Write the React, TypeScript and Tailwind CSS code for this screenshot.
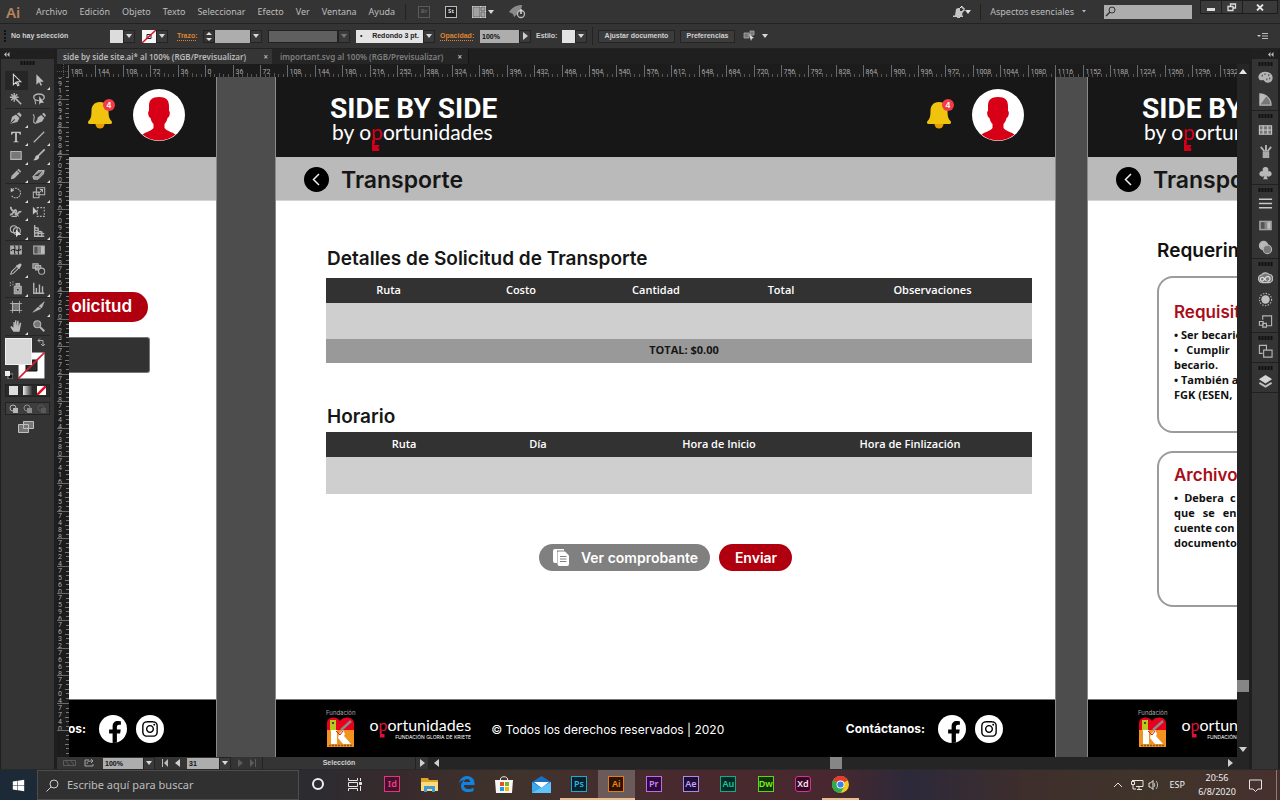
import React from "react";
import {
  FaFacebookF,
  FaInstagram,
  FaWindows,
} from "react-icons/fa";

type Kids = { children?: React.ReactNode };

/* ---------- shared bits ---------- */

function Ico({ children, size = 16 }: Kids & { size?: number }) {
  return (
    <svg
      width={size}
      height={size}
      viewBox="0 0 16 16"
      fill="none"
      stroke="#b4b4b4"
      strokeWidth="1.2"
      className="shrink-0"
      aria-hidden="true"
    >
      {children}
    </svg>
  );
}

function Down({ dim = false }: { dim?: boolean }) {
  return (
    <svg width="6" height="4" viewBox="0 0 6 4" className="shrink-0" aria-hidden="true">
      <path d="M0 0h6L3 4z" fill={dim ? "#777" : "#d8d8d8"} />
    </svg>
  );
}

function Arrow({ dir, color = "#cfcfcf" }: { dir: "left" | "right" | "up" | "down"; color?: string }) {
  const d = {
    left: "M6 0v8L1 4z",
    right: "M2 0v8l5-4z",
    up: "M0 6h8L4 1z",
    down: "M0 2h8L4 7z",
  }[dir];
  return (
    <svg width="8" height="8" viewBox="0 0 8 8" className="shrink-0" aria-hidden="true">
      <path d={d} fill={color} />
    </svg>
  );
}

function DropButton({ label, dim }: { label: string; dim?: boolean }) {
  return (
    <button
      aria-label={label}
      className="flex h-[13px] w-3 shrink-0 items-center justify-center border border-[#232323] bg-[#3a3a3a]"
    >
      <Down dim={dim} />
    </button>
  );
}

function Grip() {
  return (
    <svg width="15" height="4" viewBox="0 0 15 4" className="shrink-0" aria-hidden="true">
      <path d="M1.500 0v4M4.500 0v4M7.500 0v4M10.500 0v4M13.500 0v4" stroke="#111" strokeWidth="2" />
    </svg>
  );
}

/* ---------- menu bar ---------- */

const menus = ["Archivo", "Edición", "Objeto", "Texto", "Seleccionar", "Efecto", "Ver", "Ventana", "Ayuda"];

function MenuBar() {
  return (
    <header className="flex h-6 shrink-0 items-center border-b border-[#222] bg-[#343434] text-[9px] text-[#bdbdbd]">
      <span className="w-9 shrink-0 pl-[6px] text-[15px] leading-5 font-semibold text-[#b8845f]">Ai</span>
      <nav className="flex shrink-0 gap-3">
        {menus.map((m) => (
          <button key={m}>{m}</button>
        ))}
      </nav>
      <span className="ml-[10px] h-4 w-px bg-[#222]" />
      <div className="ml-3 flex items-center gap-[15px] text-[6px] font-bold">
        <span className="flex h-3 w-3 items-center justify-center border border-[#5a5a5a] text-[#5f5f5f]">Br</span>
        <span className="flex h-3 w-3 items-center justify-center border border-[#bbb] bg-[#222] text-[#ddd]">St</span>
        <button aria-label="Organizar documentos" className="flex items-center gap-[2px]">
          <svg width="14" height="12" viewBox="0 0 14 12" aria-hidden="true">
            <path d="M0 0h14v12H0z" fill="#d9d9d9" />
            <path d="M1 1h7v10H1zM9 1h4v4H9zM9 6h4v5H9z" fill="#a2a2a2" stroke="#4a4a4a" strokeWidth=".6" />
          </svg>
          <Down />
        </button>
        <svg width="17" height="14" viewBox="0 0 17 14" aria-hidden="true">
          <path d="M0 7C4 1 9 0 13 0c0 4-3 8-8 12l-1-3-4-2z" fill="#8a8a8a" />
          <circle cx="12" cy="9" r="3.500" fill="#343434" stroke="#bbb" strokeWidth="1.300" />
          <path d="M12 4v5" stroke="#ddd" strokeWidth="1.500" />
        </svg>
      </div>
      <div className="ml-auto flex items-center">
        <svg width="18" height="12" viewBox="0 0 18 12" aria-hidden="true">
          <path d="M0 9.500h2L3 3l2-1h2v3h3l-1 4.500h1V11H0zM4 11h3v1H4z" fill="#c4c4c4" />
          <path d="M7 2l2-2v2h2v3H9" stroke="#eee" fill="none" />
          <path d="M12 4h6l-3 4z" fill="#ddd" />
        </svg>
        <span className="mx-[9px] h-4 w-px bg-[#222]" />
        <button className="flex items-center gap-2">
          <span>Aspectos esenciales</span>
          <svg width="4" height="3" viewBox="0 0 4 3" aria-hidden="true">
            <path d="M0 0h4L2 2.500z" fill="#bbb" />
          </svg>
        </button>
        <label className="ml-[18px] flex h-[14px] w-[88px] items-center bg-[#adadad] pl-[1px]">
          <svg width="11" height="11" viewBox="0 0 11 11" fill="none" stroke="#333" aria-hidden="true">
            <circle cx="7" cy="4" r="3" />
            <path d="M5 6L1 10" strokeWidth="1.400" />
          </svg>
          <input aria-label="Buscar en la ayuda" className="w-0 min-w-0 flex-1 bg-transparent outline-none" />
        </label>
      </div>
      <div className="mr-[2px] ml-2 flex h-[14px] self-start border border-[#1d1d1d] bg-[#3a3a3a]">
        <button aria-label="Minimizar" className="flex w-5 items-center justify-center">
          <span className="mt-1 h-[3px] w-2 bg-[#ddd]" />
        </button>
        <button aria-label="Restaurar" className="flex w-[21px] items-center justify-center border-l border-[#1d1d1d]">
          <svg width="10" height="9" viewBox="0 0 10 9" fill="none" stroke="#ddd" strokeWidth="1.300" aria-hidden="true">
            <path d="M3.500 3V1h5v4h-2M1 3.500h5v4H1z" />
          </svg>
        </button>
        <button aria-label="Cerrar" className="flex w-[35px] items-center justify-center border-l border-[#1d1d1d]">
          <svg width="8" height="7" viewBox="0 0 8 7" stroke="#e4e4e4" strokeWidth="1.800" aria-hidden="true">
            <path d="M1 .5l6 6M7 .5l-6 6" />
          </svg>
        </button>
      </div>
    </header>
  );
}

/* ---------- control bar ---------- */

function ControlBar() {
  return (
    <section className="flex h-[25px] shrink-0 items-center border-b border-[#222] bg-[#343434] pl-1 font-['Liberation_Sans'] text-[7px] font-bold text-[#d0d0d0]">
      <span className="h-3 w-0 border-l-2 border-dotted border-[#111]" />
      <span className="w-[104px] shrink-0 pl-[5px]">No hay selección</span>
      <span className="h-[13px] w-[13px] bg-[#dcdcdc]" />
      <DropButton label="Relleno" />
      <svg width="14" height="13" viewBox="0 0 14 13" className="ml-[7px]" aria-hidden="true">
        <path d="M0 0h14v13H0z" fill="#f5f5f5" />
        <path d="M5 4.500h4v4H5z" fill="none" stroke="#222" />
        <path d="M0 13L14 0" stroke="#d8192b" strokeWidth="1.500" />
      </svg>
      <DropButton label="Color de trazo" />
      <label htmlFor="stroke" className="ml-[9px] w-[26px] text-[#dd8430] underline decoration-dotted underline-offset-2">
        Trazo:
      </label>
      <span className="flex h-[13px] w-3 flex-col items-center justify-between border border-[#222] py-px">
        <svg width="6" height="3" viewBox="0 0 6 3" aria-hidden="true"><path d="M0 3h6L3 0z" fill="#ddd" /></svg>
        <svg width="6" height="3" viewBox="0 0 6 3" aria-hidden="true"><path d="M0 0h6L3 3z" fill="#ddd" /></svg>
      </span>
      <input id="stroke" className="h-[13px] w-[35px] bg-[#adadad] outline-none" />
      <DropButton label="Grosor" />
      <span className="ml-[6px] h-[13px] w-[70px] border border-[#222] bg-[#5f5f5f]" />
      <DropButton label="Perfil de anchura" dim />
      <select
        aria-label="Definición de pincel"
        className="ml-[6px] h-[13px] w-[67px] appearance-none bg-[#e4e4e4] pl-1 text-[7px] text-[#222] outline-none"
      >
        <option>•&nbsp;&nbsp;&nbsp;&nbsp;&nbsp;Redondo 3 pt.</option>
      </select>
      <DropButton label="Pinceles" />
      <label htmlFor="opacity" className="ml-[5px] w-10 text-[#dd8430] underline decoration-dotted underline-offset-2">
        Opacidad:
      </label>
      <input id="opacity" defaultValue="100%" className="h-[13px] w-[39px] bg-[#adadad] pl-[2px] text-[7px] text-[#111] outline-none" />
      <button aria-label="Deslizador de opacidad" className="flex h-[13px] w-3 items-center justify-center border border-[#232323] bg-[#3a3a3a]">
        <Arrow dir="right" />
      </button>
      <span className="w-[31px] pl-[5px]">Estilo:</span>
      <span className="h-[13px] w-[13px] bg-[#e2e2e2]" />
      <DropButton label="Estilo gráfico" />
      <span className="mx-[5px] h-[18px] w-px bg-[#222]" />
      <button className="h-[13px] w-[77px] border border-[#242424] bg-[#3c3c3c]">Ajustar documento</button>
      <button className="ml-[5px] h-[13px] w-[55px] border border-[#242424] bg-[#3c3c3c]">Preferencias</button>
      <button aria-label="Alinear" className="ml-[8px] flex items-center gap-[6px]">
        <svg width="13" height="12" viewBox="0 0 13 12" aria-hidden="true">
          <path d="M1 3h5v5H1zM7 1h4v4H7z" fill="#777" stroke="#aaa" strokeWidth=".8" />
          <path d="M6 4l5 4-2 .4L8 11z" fill="#ddd" />
        </svg>
        <Down />
      </button>
      <button aria-label="Menú del panel" className="mr-3 ml-auto">
        <svg width="11" height="8" viewBox="0 0 11 8" aria-hidden="true">
          <path d="M0 3h4L2 5z" fill="#ccc" />
          <path d="M5 1.500h6M5 4h6M5 6.500h6" stroke="#bbb" />
        </svg>
      </button>
    </section>
  );
}

/* ---------- tools panel ---------- */

const toolGroups: { h: string; tools: { name: string; icon: React.ReactNode; more?: boolean; on?: boolean }[] }[] = [
  {
    h: "h-[38px]",
    tools: [
      { name: "Selección", on: true, icon: <path d="M5 1.500v12l3-3 2 4 1.500-.8-2-3.700h4z" fill="#222" stroke="#d5d5d5" /> },
      { name: "Selección directa", more: true, icon: <path d="M5 1.500v12l3-3 2 4 1.500-.8-2-3.700h4z" fill="#bdbdbd" stroke="none" /> },
      { name: "Varita mágica", icon: <><path d="M8 8l6 6" strokeWidth="1.800" /><path d="M6 1v10M1 6h10M2.500 2.500l7 7M9.500 2.500l-7 7" strokeWidth="1.600" /></> },
      { name: "Lazo", icon: <><ellipse cx="8" cy="6" rx="6" ry="3.800" strokeWidth="1.600" /><path d="M4 9c-2 2 1 3 0 5" /><path d="M8 4v11l2-2.500h4z" fill="#c8c8c8" stroke="#333" strokeWidth=".5" /></> },
    ],
  },
  {
    h: "h-[75px]",
    tools: [
      { name: "Pluma", more: true, icon: <><path d="M1.500 14.500l2-8L8 4l4 4-2.500 4.500z" fill="#b4b4b4" stroke="none" /><path d="M9 3l4 4 1.500-2.500-3-3z" fill="#b4b4b4" stroke="none" /><path d="M2 14l4.500-4.500" stroke="#333" /></> },
      { name: "Curvatura", icon: <><path d="M5 14.500l1.500-7 4-3L14 8l-2.500 4zM11.500 3.500l3.500 3.500.8-2.500-2.300-2.500z" fill="#b4b4b4" stroke="none" /><path d="M1 4c4 2-1 8 1.500 9.500S5 12 6 11" /></> },
      { name: "Texto", more: true, icon: <path d="M2.500 2h11v3.500h-1C12 4 11.500 3.200 9 3.200V12c0 1 .5 1.200 2 1.400v.6H5v-.6c1.500-.2 2-.4 2-1.400V3.200C4.500 3.200 4 4 3.500 5.500h-1z" fill="#c8c8c8" stroke="none" /> },
      { name: "Segmento de línea", more: true, icon: <path d="M2 14L14 2" strokeWidth="1.400" /> },
      { name: "Rectángulo", more: true, icon: <path d="M2 4h12v9H2z" fill="#777" /> },
      { name: "Pincel", more: true, icon: <><path d="M14.500 1.500L7 9" strokeWidth="2" /><path d="M8 9c1 4-3 5-7 5 3-1 2-5 5-6z" fill="#c0c0c0" stroke="none" /></> },
      { name: "Lápiz", more: true, icon: <><path d="M2 14l1-4 8-8 3 3-8 8z" fill="#b0b0b0" stroke="none" /><path d="M9.500 4l2.800 2.800" stroke="#444" /></> },
      { name: "Borrador", more: true, icon: <path d="M1 11l6-7h7l-1 4-6 6H2zM1 11h6l6-7" fill="#999" stroke="#d0d0d0" strokeWidth=".8" /> },
    ],
  },
  {
    h: "h-[57px]",
    tools: [
      { name: "Rotar", more: true, icon: <><path d="M4 4a5.500 5.500 0 1 1-1 7" strokeDasharray="2 1" /><path d="M2 2v5l4-2z" fill="#c0c0c0" stroke="none" /></> },
      { name: "Escala", more: true, icon: <><path d="M5 2h9.500v8H5zM1.500 7H8v6.500H1.500z" /><path d="M8 8l4-4M9 4h3v3" /></> },
      { name: "Anchura", more: true, icon: <><path d="M2 2c0 3 1 4 3 5M1 11c4 1 5-7 7-5s-2 4 0 5 3-5 6-3" strokeWidth="2" /><path d="M5 7l6 6M3 13h6" /></> },
      { name: "Transformación libre", icon: <><path d="M6 3h8v10H6z" strokeDasharray="2 1.500" /><path d="M1 2v9l2.500-2.500H7z" fill="#c8c8c8" stroke="none" /></> },
      { name: "Creador de formas", more: true, icon: <><circle cx="5.500" cy="6" r="4" /><circle cx="9" cy="8" r="4" /><path d="M8 6v9l2.500-2.500H14z" fill="#ddd" stroke="none" /></> },
      { name: "Cuadrícula de perspectiva", more: true, icon: <path d="M3 1v13h11M3 4l4 1v9M3 7l8 2v5M3 10l11 1" strokeWidth="1.500" /> },
    ],
  },
  {
    h: "h-[57px]",
    tools: [
      { name: "Malla", icon: <><path d="M2 3.500h12v9H2z" fill="#aaa" /><path d="M2 9c4-5 7 3 12-2M6 3c3 3-2 6 1 10M11 3c2 4-2 5 0 10" stroke="#222" /></> },
      { name: "Degradado", icon: <><path d="M2 3.500h4v9H2z" fill="#555" stroke="none" /><path d="M6 3.500h4v9H6z" fill="#888" stroke="none" /><path d="M10 3.500h4v9h-4z" fill="#bbb" stroke="none" /><path d="M2 3.500h12v9H2z" /></> },
      { name: "Cuentagotas", more: true, icon: <><path d="M2 14l1-3 6-6 2 2-6 6z" /><path d="M8 4l4 4 1-2 1.500-3L13 1.500 10 3z" fill="#bbb" stroke="none" /></> },
      { name: "Fusión", icon: <><path d="M1 2h6v5H1zM4 4h6v5H4z" fill="#777" /><circle cx="11" cy="10.500" r="3.500" fill="#343434" /></> },
      { name: "Rociar símbolos", more: true, icon: <><path d="M6 6h8v8.500H6zM8 3h4v3H8z" fill="#999" /><circle cx="10" cy="10" r="1.800" fill="#333" /><path d="M1 2h1M4 1h1M1 5h1M4 4h1" strokeWidth="1.600" /></> },
      { name: "Gráfica de columnas", more: true, icon: <path d="M2 2v12h12M5 14V8M8.500 14V4M12 14V6" strokeWidth="1.600" /> },
    ],
  },
  {
    h: "h-[38px]",
    tools: [
      { name: "Mesa de trabajo", icon: <><path d="M4 4h8v8H4z" fill="#777" /><path d="M4 1v14M12 1v14M1 4h14M1 12h14" strokeWidth=".9" /></> },
      { name: "Sector", more: true, icon: <path d="M1 14l6-6 3 2zM8 7l6-5-3 7z" fill="#b8b8b8" stroke="#b8b8b8" strokeWidth=".6" /> },
      { name: "Mano", more: true, icon: <path d="M5 14.500L1.500 9 3 8l2 2V3.500h1.500V8L7 1.500h1.500V8l1-6H11v6.500l1.500-4.500L14 4.500 12 14.500z" fill="#bbb" stroke="none" /> },
      { name: "Zoom", icon: <><circle cx="6" cy="6" r="4" fill="#777" /><path d="M9 9l5 5" strokeWidth="2.400" /></> },
    ],
  },
];

function ToolsPanel() {
  return (
    <aside className="flex w-[55px] shrink-0 flex-col border-x border-[#1e1e1e] bg-[#343434]">
      <div className="flex h-[10px] shrink-0 items-center bg-[#202020] pl-[3px] text-[#bbb]">
        <svg width="6" height="5" viewBox="0 0 6 5" aria-hidden="true">
          <path d="M2.500 0v5L0 2.500zM5.500 0v5L3 2.500z" fill="#bbb" />
        </svg>
      </div>
      <div className="flex h-[12px] shrink-0 justify-center pt-[2px]">
        <Grip />
      </div>
      {toolGroups.map((g, i) => (
        <div key={i} className={`grid ${g.h} mx-1 shrink-0 grid-cols-2 border-b border-[#252525]`}>
          {g.tools.map((t) => (
            <button
              key={t.name}
              aria-label={t.name}
              className={`relative flex items-center justify-center ${t.on ? "bg-[#262626]" : ""}`}
            >
              <Ico size={14}>{t.icon}</Ico>
              {t.more && (
                <svg width="3" height="3" viewBox="0 0 3 3" className="absolute right-0 bottom-0" aria-hidden="true">
                  <path d="M3 0v3H0z" fill="#ddd" />
                </svg>
              )}
            </button>
          ))}
        </div>
      ))}
      <div className="relative mt-[2px] h-[42px] shrink-0">
        <svg width="27" height="27" viewBox="0 0 27 27" className="absolute top-[14px] left-[17px]" aria-hidden="true">
          <path d="M0 0h27v27H0z" fill="#fff" stroke="#222" />
          <path d="M8 8h11v11H8z" fill="#2d2d2d" stroke="#111" />
          <path d="M0 27L27 0" stroke="#d0202f" strokeWidth="1.600" />
        </svg>
        <span className="absolute top-0 left-1 h-[27px] w-[27px] border border-[#f0f0f0] bg-[#d8d8d8]" />
        <svg width="9" height="9" viewBox="0 0 9 9" fill="none" stroke="#aaa" className="absolute top-0 left-[36px]" aria-hidden="true">
          <path d="M1 2.500h5v5M3 .5l-2 2 2 2M4 6l2 2 2-2" />
        </svg>
        <svg width="8" height="8" viewBox="0 0 8 8" className="absolute top-[33px] left-1" aria-hidden="true">
          <path d="M3 3h5v5H3z" fill="#111" stroke="#999" />
          <path d="M0 0h5v5H0z" fill="#eee" />
        </svg>
      </div>
      <div className="mx-1 mt-[4px] flex h-[13px] shrink-0 items-center justify-around border border-[#222] bg-[#2a2a2a]">
        <button aria-label="Color" className="h-[9px] w-[9px] bg-[#ddd]" />
        <button aria-label="Degradado lineal" className="h-[9px] w-[9px] bg-linear-to-r from-[#eee] to-[#333]" />
        <button aria-label="Ninguno">
          <svg width="9" height="9" viewBox="0 0 9 9" aria-hidden="true">
            <path d="M0 0h9v9H0z" fill="#fff" />
            <path d="M0 9L9 0" stroke="#e01020" strokeWidth="2.500" />
          </svg>
        </button>
      </div>
      <div className="mx-1 mt-[5px] flex h-[13px] shrink-0 items-center justify-around border border-[#222] bg-[#3e3e3e]">
        {["#b8b8b8", "#8d8d8d", "#585858"].map((c) => (
          <svg key={c} width="9" height="9" viewBox="0 0 9 9" aria-hidden="true">
            <circle cx="4" cy="4" r="3" fill="none" stroke={c} />
            <path d="M4 4h5v5H4z" fill={c} />
          </svg>
        ))}
      </div>
      <button aria-label="Modo de pantalla" className="mt-[6px] ml-[17px]">
        <svg width="16" height="12" viewBox="0 0 16 12" fill="#777" stroke="#c0c0c0" aria-hidden="true">
          <path d="M.5 3.500h10v8H.5zM5.500.5h10v7h-10z" />
        </svg>
      </button>
    </aside>
  );
}

/* ---------- rulers ---------- */

const STEP = 27.42;

function TopRuler() {
  const marks = Array.from({ length: 43 }, (_, i) => i);
  return (
    <svg height="13" className="block w-full bg-[#1c1c1c] font-['Roboto']" aria-hidden="true">
      <path d="M0 7.500h12M6.500 0v13" stroke="#555" strokeDasharray="1 1" />
      {marks.map((i) => {
        const x = Math.round(11 + i * STEP) + 0.5;
        return (
          <g key={i}>
            <path d={`M${x} 1v12`} stroke="#6a6a6a" />
            <path d={`M${x + 5} 10v3M${x + 9} 10v3M${x + 14} 9v4M${x + 18} 10v3M${x + 23} 10v3`} stroke="#555" />
            <text x={x + 2} y="10" fontSize="7" fill="#aaa">
              {Math.abs(i * 36 - 180)}
            </text>
          </g>
        );
      })}
    </svg>
  );
}

function SideRuler() {
  const marks = Array.from({ length: 25 }, (_, i) => i);
  return (
    <svg width="12" className="block h-full shrink-0 bg-[#1c1c1c] font-['Roboto']" aria-hidden="true">
      {marks.map((i) => {
        const y = Math.round(-5 + i * STEP) + 0.5;
        const digits = i < 24 ? String(6912 + i * 36).split("") : [];
        return (
          <g key={i}>
            <path d={`M0 ${y}h12`} stroke="#6a6a6a" />
            <path d={`M9 ${y + 5}h3M9 ${y + 9}h3M8 ${y + 14}h4M9 ${y + 18}h3M9 ${y + 23}h3`} stroke="#777" />
            {digits.map((d, k) => (
              <text key={k} x="1" y={y + 6 + k * 7} fontSize="7" fill="#aaa">
                {d}
              </text>
            ))}
          </g>
        );
      })}
    </svg>
  );
}

/* ---------- artboard pieces ---------- */

function Brand() {
  return (
    <div className="shrink-0 text-white">
      <div className="font-['Roboto'] text-[28px] leading-[30px] font-bold whitespace-nowrap">SIDE BY SIDE</div>
      <div className="pl-[2px] font-['Lato'] text-[21px] leading-4 whitespace-nowrap">
        by o
        <span className="relative text-[#d4001a]">
          p
          <svg width="8" height="11" viewBox="0 0 8 11" className="absolute top-[21px] left-px" aria-hidden="true">
            <path d="M0 0h2.200v5h5v2H6v1h1.200v3H0z" fill="#d4001a" />
          </svg>
        </span>
        ortunidades
      </div>
    </div>
  );
}

function UserArea() {
  return (
    <div className="flex shrink-0 items-center gap-[18px] pb-1">
      <div className="relative">
        <svg width="28" height="30" viewBox="0 0 28 30" className="block" aria-hidden="true">
          <circle cx="13" cy="24" r="4.500" fill="#e59d00" />
          <path d="M13 2c-6 0-8.500 4-8.500 9 0 6-1 8-3 10-1 1-.5 3 1 3h21c1.500 0 2-2 1-3-2-2-3-4-3-10 0-5-2.500-9-8.500-9z" fill="#efc30e" />
        </svg>
        <span className="absolute -top-px right-0 flex h-3 w-3 items-center justify-center rounded-full bg-[#f23a48] font-['Inter'] text-[8px] font-semibold text-white">
          4
        </span>
      </div>
      <svg width="52" height="52" viewBox="0 0 52 52" aria-hidden="true">
        <circle cx="26" cy="26" r="26" fill="#fff" />
        <path d="M26 8c-7 0-10 3-10 9v5c-1.500 0-1 6 1.500 7 .5 3 2 5 3 6v4c-2 3-8 4-11 6.500a26 26 0 0 0 33 0C39.500 43 33.500 42 31.500 39v-4c1-1 2.500-3 3-6 2.500-1 3-7 1.500-7v-5c0-6-3-9-10-9z" fill="#d70016" />
      </svg>
    </div>
  );
}

function PageTitle() {
  return (
    <div className="flex shrink-0 items-center gap-3 pt-[2px] pl-7">
      <button aria-label="Volver" className="flex h-[25px] w-[25px] items-center justify-center rounded-full bg-black">
        <svg width="9" height="13" viewBox="0 0 9 13" fill="none" stroke="#eee" strokeWidth="1.500" aria-hidden="true">
          <path d="M7 1L1.500 6.500 7 12" />
        </svg>
      </button>
      <h1 className="text-[23px] leading-7 font-semibold text-[#161616]">Transporte</h1>
    </div>
  );
}

function FoundationLogos() {
  return (
    <div className="flex shrink-0 items-center gap-[14px] pl-[50px] text-white">
      <div className="flex flex-col items-center">
        <span className="font-['Inter'] text-[6px] leading-[6px] text-[#aaa]">Fundación</span>
        <svg width="27" height="32" viewBox="0 0 27 32" aria-hidden="true">
          <path d="M0 7c0-6 9-8 13-2 4-6 14-4 14 2v8H0z" fill="#e8001e" />
          <path d="M0 14h27v17H0z" fill="#f4921e" />
          <path d="M3 4h6v11H3z" fill="#b8c81e" />
          <path d="M4 14h6v14H4zM12 18l4-4 2 4-1 2 7 8h-8l-5-6z" fill="#fff" />
          <path d="M14 14L24 5" stroke="#8a8a8a" strokeWidth="2.400" />
          <path d="M9 15l4 4 3-4" stroke="#d3202a" fill="none" />
          <circle cx="6" cy="7" r="1" fill="#222" />
          <path d="M2 29.500h23" stroke="#8a5a20" strokeWidth="1.500" strokeDasharray="2 1" />
        </svg>
      </div>
      <div className="flex flex-col items-end font-['Lato']">
        <span className="text-[16px] leading-[18px] whitespace-nowrap">
          o
          <span className="relative text-[#e0103a]">
            p
            <svg width="6" height="7" viewBox="0 0 6 7" className="absolute top-[16px] left-px" aria-hidden="true">
              <path d="M0 0h1.500v3h3v3.500H0z" fill="#e0103a" />
            </svg>
          </span>
          ortunidades
        </span>
        <span className="font-['Inter'] text-[5px] leading-[7px] whitespace-nowrap">FUNDACIÓN GLORIA DE KRIETE</span>
      </div>
    </div>
  );
}

function Contact({ label = "Contáctanos:" }: { label?: string }) {
  return (
    <div className="flex shrink-0 items-center pr-[52px] text-white">
      <span className="text-[12px] font-bold">{label}</span>
      <a href="#facebook" aria-label="Facebook" className="ml-[13px] flex h-7 w-7 items-end justify-center overflow-hidden rounded-full bg-white pl-1 text-black">
        <FaFacebookF size={22} />
      </a>
      <a href="#instagram" aria-label="Instagram" className="ml-[9px] flex h-7 w-7 items-center justify-center rounded-full bg-white text-black">
        <FaInstagram size={18} />
      </a>
    </div>
  );
}

function Artboard({
  head,
  title,
  foot,
  className,
  end,
  children,
}: Kids & { head: React.ReactNode; title?: React.ReactNode; foot: React.ReactNode; className: string; end?: boolean }) {
  const side = end ? "justify-end" : "justify-between";
  return (
    <article className={`flex flex-col overflow-hidden border-x border-[#8a8a8a] bg-white font-['Inter',sans-serif] ${className}`}>
      <div className={`flex h-20 shrink-0 items-center bg-[#171717] ${side}`}>{head}</div>
      <div className="flex h-11 shrink-0 items-center border-b border-[#d5d5d5] bg-[#bababa]">{title}</div>
      <div className="min-h-0 flex-1">{children}</div>
      <div className={`flex h-[58px] shrink-0 items-center border-t border-[#777] bg-black ${side}`}>{foot}</div>
    </article>
  );
}

const th = "p-0 text-center font-semibold";

function RequestForm() {
  return (
    <div className="pt-[46px] pr-[23px] pl-[50px] text-[#161616]">
      <h2 className="pl-px text-[19px] leading-6 font-semibold">Detalles de Solicitud de Transporte</h2>
      <table className="mt-[7px] w-full table-fixed border-collapse font-['Open_Sans',sans-serif] text-[11px]">
        <colgroup>
          <col className="w-[125px]" />
          <col className="w-[140px]" />
          <col className="w-[130px]" />
          <col className="w-[120px]" />
          <col />
        </colgroup>
        <thead>
          <tr className="h-[25px] bg-[#323232] text-white">
            <th className={th}>Ruta</th>
            <th className={th}>Costo</th>
            <th className={th}>Cantidad</th>
            <th className={th}>Total</th>
            <th className="p-0 pr-2 text-center font-semibold">Observaciones</th>
          </tr>
        </thead>
        <tbody>
          <tr className="h-[36px] bg-[#cfcfcf]">
            <td /><td /><td /><td /><td />
          </tr>
        </tbody>
        <tfoot>
          <tr className="h-6 bg-[#999]">
            <td colSpan={5} className="p-0 pb-[2px] pl-[10px] text-center font-bold">TOTAL: $0.00</td>
          </tr>
        </tfoot>
      </table>
      <h2 className="mt-[42px] pl-px text-[19px] leading-6 font-semibold">Horario</h2>
      <table className="mt-[3px] w-full table-fixed border-collapse font-['Open_Sans',sans-serif] text-[11px]">
        <colgroup>
          <col className="w-[156px]" />
          <col className="w-[112px]" />
          <col className="w-[250px]" />
          <col />
        </colgroup>
        <thead>
          <tr className="h-[25px] bg-[#323232] text-white">
            <th className={th}>Ruta</th>
            <th className={th}>Día</th>
            <th className={th}>Hora de Inicio</th>
            <th className="p-0 pr-14 text-center font-semibold">Hora de Finlización</th>
          </tr>
        </thead>
        <tbody>
          <tr className="h-[37px] bg-[#cfcfcf]">
            <td /><td /><td /><td />
          </tr>
        </tbody>
      </table>
      <div className="mt-[50px] mr-[27px] flex justify-center gap-[9px] text-[14px] font-semibold text-white">
        <button className="flex h-[27px] items-center gap-3 rounded-full bg-[#808080] pr-3 pl-[14px]">
          <svg width="16" height="17" viewBox="0 0 16 17" aria-hidden="true">
            <path d="M2 0h9v1.500H4V14H2a2 2 0 0 1-2-2V2a2 2 0 0 1 2-2z" fill="#fff" />
            <path d="M5.500 2.500H12l4 4V15a2 2 0 0 1-2 2H6.500a2 2 0 0 1-2-2V3.500a1 1 0 0 1 1-1z" fill="#fff" />
            <path d="M7 7.500h6.500M7 10h6.500M7 12.500h6.500" stroke="#808080" />
          </svg>
          Ver comprobante
        </button>
        <button className="flex h-[27px] w-[73px] items-center justify-center rounded-full bg-[#b0000f] pl-px">Enviar</button>
      </div>
    </div>
  );
}

function Requirements() {
  return (
    <div className="w-[700px] pt-[38px] pl-[69px] text-[#111]">
      <h2 className="text-[19px] leading-6 font-semibold">Requerimientos</h2>
      <section className="mt-[13px] h-[157px] rounded-2xl border-2 border-[#9b9b9b] pt-[24px] pl-[15px]">
        <h3 className="text-[17px] leading-5 font-semibold text-[#a80d18]">Requisitos</h3>
        <ul className="mt-[5px] font-['Open_Sans',sans-serif] text-[11px] leading-[15px] font-bold">
          <li>• Ser becario</li>
          <li className="flex gap-2"><span>•</span><span>Cumplir</span></li>
          <li>becario.</li>
          <li>• También a</li>
          <li>FGK (ESEN,</li>
        </ul>
      </section>
      <section className="mt-[18px] h-[156px] rounded-2xl border-2 border-[#9b9b9b] pt-[12px] pl-[15px]">
        <h3 className="text-[17px] leading-5 font-semibold text-[#a80d18]">Archivos</h3>
        <ul className="mt-[5px] font-['Open_Sans',sans-serif] text-[11px] leading-[15px] font-bold">
          <li className="flex gap-[6px]"><span>•</span><span>Debera</span><span>c</span></li>
          <li className="flex gap-2"><span>que</span><span>se</span><span>en</span></li>
          <li>cuente con</li>
          <li>documento</li>
        </ul>
      </section>
    </div>
  );
}

function SideContent() {
  return (
    <div className="pt-[91px] text-white">
      <div className="flex">
        <button className="flex h-[30px] w-[79px] items-center justify-end rounded-r-full bg-[#b0000f] pr-4 text-[17px] font-semibold">
          olicitud
        </button>
      </div>
      <div className="mt-[15px] h-9 w-[81px] rounded-r-[3px] border border-l-0 border-[#777] bg-[#323232]" />
    </div>
  );
}

/* ---------- document window ---------- */

function StatusBar() {
  const cell = "flex h-full items-center border-r border-[#222]";
  return (
    <div className="flex h-3 shrink-0 items-center bg-[#343434] font-['Liberation_Sans'] text-[7px] font-bold text-[#d0d0d0]">
      <svg width="34" height="10" viewBox="0 0 34 10" fill="none" className="ml-1" aria-hidden="true">
        <path d="M2.500 2.500h12v5h-12zM5 3l3 4M10 3l3 4" stroke="#5c5c5c" />
        <path d="M28 2h-4v6h8V6M26 6c0-3 2-3 5-3M30 1l2 2-2 2" stroke="#a5a5a5" />
      </svg>
      <input aria-label="Nivel de zoom" defaultValue="100%" className="ml-[8px] h-[11px] w-10 bg-[#adadad] pl-[2px] text-[7px] text-[#111] outline-none" />
      <DropButton label="Zoom" />
      <div className="flex w-8 items-center justify-center gap-[5px]">
        <svg width="8" height="8" viewBox="0 0 8 8" aria-hidden="true"><path d="M1 0v8h1V0zM7 0v8L3 4z" fill="#bbb" /></svg>
        <Arrow dir="left" />
      </div>
      <input aria-label="Mesa de trabajo" defaultValue="31" className="h-[11px] w-8 bg-[#adadad] pl-[2px] text-[7px] text-[#111] outline-none" />
      <DropButton label="Mesas de trabajo" />
      <div className={`${cell} w-8 justify-center gap-[5px]`}>
        <Arrow dir="right" color="#5c5c5c" />
        <svg width="8" height="8" viewBox="0 0 8 8" aria-hidden="true"><path d="M6 0v8h1V0zM1 0v8l4-4z" fill="#5c5c5c" /></svg>
      </div>
      <span className={`${cell} w-[153px] justify-center`}>Selección</span>
      <span className={`${cell} w-[13px] justify-center`}><Arrow dir="right" /></span>
      <div className="flex h-full flex-1 items-center bg-[#252525] pr-[15px] pl-1">
        <Arrow dir="left" />
        <span className="h-full grow-[390]" />
        <span className="h-full w-3 bg-[#868686]" />
        <span className="h-full grow-[385]" />
        <Arrow dir="right" />
      </div>
    </div>
  );
}

function DocumentWindow() {
  return (
    <main className="flex min-w-0 flex-1 flex-col bg-[#1f1f1f] pl-[2px]">
      <div className="flex h-[15px] shrink-0 text-[8px] font-semibold">
        <button className="flex w-[215px] items-center justify-between bg-[#353535] pr-1 pl-[6px] text-[#b9b9b9]">
          <span>side by side site.ai* al 100% (RGB/Previsualizar)</span>
          <span>×</span>
        </button>
        <button className="flex w-[197px] items-center justify-between border-r border-[#141414] bg-[#252525] pr-[6px] pl-2 text-[#7e7e7e]">
          <span>important.svg al 100% (RGB/Previsualizar)</span>
          <span className="text-[#bbb]">×</span>
        </button>
      </div>
      <div className="flex min-h-0 flex-1">
        <div className="flex min-w-0 flex-1 flex-col">
          <div className="h-[13px] shrink-0 overflow-hidden">
            <TopRuler />
          </div>
          <div className="flex min-h-0 flex-1">
            <SideRuler />
            <div className="flex min-w-0 flex-1 overflow-hidden bg-[#4d4d4d]">
              <Artboard
                className="w-[148px] shrink-0 border-l-0"
                end
                head={<div className="pr-[31px]"><UserArea /></div>}
                foot={<Contact label="os:" />}
              >
                <SideContent />
              </Artboard>
              <Artboard
                className="mr-[31px] ml-[58px] min-w-0 flex-1"
                head={<><div className="pl-[54px]"><Brand /></div><div className="pr-[31px]"><UserArea /></div></>}
                title={<PageTitle />}
                foot={
                  <>
                    <div className="flex items-center gap-5 text-white">
                      <FoundationLogos />
                      <span className="pt-[3px] text-[12px] whitespace-nowrap">© Todos los derechos reservados | 2020</span>
                    </div>
                    <Contact />
                  </>
                }
              >
                <RequestForm />
              </Artboard>
              <Artboard
                className="w-[150px] shrink-0 border-r-0"
                head={<div className="pl-[54px]"><Brand /></div>}
                title={<PageTitle />}
                foot={<FoundationLogos />}
              >
                <Requirements />
              </Artboard>
            </div>
          </div>
        </div>
        <div className="flex w-3 shrink-0 flex-col items-center bg-[#252525] pt-1 pb-1">
          <Arrow dir="up" color="#e6e6e6" />
          <span className="grow-[604]" />
          <span className="h-3 w-full bg-[#868686]" />
          <span className="grow-[53]" />
          <Arrow dir="down" />
        </div>
      </div>
      <StatusBar />
    </main>
  );
}

/* ---------- right dock ---------- */

const dock: { name: string; icon: React.ReactNode }[][] = [
  [
    { name: "Color", icon: <><path d="M8 2.500c-4 0-7 2-7 5s2 3 4 2.500 2 3 5 3 5-2 5-5-3-5.500-7-5.500z" fill="#b4b4b4" /><path d="M4 6h1M7 4.500h1M11 5.500h1M12 9h1M9 10h1" stroke="#333" strokeWidth="1.800" /></> },
    { name: "Guía de color", icon: <><path d="M2 2v12h12C14 8 9 2 2 2z" fill="#777" /><path d="M2 2c3 0 5 1 7 2.500L2 14z" fill="#bbb" stroke="none" /></> },
  ],
  [
    { name: "Muestras", icon: <><path d="M1.500 4h13v9h-13z" fill="#777" stroke="#c4c4c4" /><path d="M1 8.500h14M5.500 4v9M10.500 4v9" stroke="#ccc" /></> },
    { name: "Pinceles", icon: <><path d="M5 8h7v7H5z" fill="#aaa" stroke="none" /><path d="M7 8L3 3M8.500 8V1M10 8l4-5" strokeWidth="2" /></> },
    { name: "Símbolos", icon: <path d="M8 1a3 3 0 0 1 2.700 4.500A3 3 0 1 1 9 10l1.500 4h-5L7 10a3 3 0 1 1-1.700-4.500A3 3 0 0 1 8 1z" fill="#b8b8b8" stroke="none" /> },
  ],
  [
    { name: "Trazo", icon: <path d="M1 3.500h14M1 8h14M1 12.500h14" stroke="#c8c8c8" strokeWidth="1.600" /> },
    { name: "Degradado", icon: <><path d="M2 3.500h12v9H2z" fill="#888" /><path d="M3 4.500h4v7H3z" fill="#555" stroke="none" /><path d="M10 4.500h3v7h-3z" fill="#c0c0c0" stroke="none" /></> },
    { name: "Transparencia", icon: <><circle cx="6" cy="6" r="4.500" fill="#b8b8b8" /><circle cx="10" cy="10" r="4.500" fill="#777" /></> },
  ],
  [
    { name: "Bibliotecas", icon: <><path d="M4.500 13.500h6.500a4.500 4.500 0 0 0 .5-9A5 5 0 0 0 4 5a4.300 4.300 0 0 0 .5 8.500z" fill="#777" stroke="#c4c4c4" /><path d="M9 11.500L5.500 8a2 2 0 1 0 0 3.500L8 8.500a2.500 2.500 0 1 1 2 3.500" stroke="#ddd" strokeWidth="1.300" /></> },
    { name: "Apariencia", icon: <><circle cx="8" cy="8" r="4.500" fill="#c0c0c0" stroke="none" /><circle cx="8" cy="8" r="6.500" strokeDasharray="1.500 1.500" /></> },
    { name: "Estilos gráficos", icon: <path d="M5 6V2h9.500v10.500H9M1.500 8h4v4h-4zM5 10h4v4H5z" /> },
  ],
  [{ name: "Mesas de trabajo", icon: <path d="M9 6V1.500H1.500V10H5M6 6.500h9v7.500H6z" /> }],
  [{ name: "Capas", icon: <><path d="M8 1l7 4.500L8 10 1 5.500z" fill="#d5d5d5" stroke="none" /><path d="M1.500 9.500L8 13.500l6.500-4" stroke="#c0c0c0" strokeWidth="2" /></> }],
];

function Dock() {
  return (
    <aside className="ml-[2px] flex w-[29px] shrink-0 flex-col border-r-2 border-l border-[#1e1e1e] bg-[#343434]">
      <div className="flex h-[10px] shrink-0 items-center justify-end bg-[#202020] pr-1">
        <svg width="6" height="5" viewBox="0 0 6 5" aria-hidden="true">
          <path d="M2.500 0v5L0 2.500zM5.500 0v5L3 2.500z" fill="#bbb" />
        </svg>
      </div>
      {dock.map((g, i) => (
        <div key={i} className="flex shrink-0 flex-col items-center border-b border-[#202020] pt-[3px]">
          <Grip />
          {g.map((p) => (
            <button key={p.name} aria-label={p.name} className="flex h-[22px] items-center">
              <Ico size={15}>{p.icon}</Ico>
            </button>
          ))}
        </div>
      ))}
    </aside>
  );
}

/* ---------- taskbar ---------- */

function AdobeTile({ t, c }: { t: string; c: string }) {
  return (
    <span className={`flex h-4 w-4 items-center justify-center border text-[9px] font-semibold ${c}`}>{t}</span>
  );
}

const apps: { name: string; icon: React.ReactNode; open?: boolean; active?: boolean }[] = [
  { name: "Cortana", icon: <span className="h-3 w-3 rounded-full border-2 border-[#eee]" /> },
  {
    name: "Vista de tareas",
    icon: (
      <svg width="14" height="13" viewBox="0 0 14 13" fill="none" stroke="#e6e6e6" aria-hidden="true">
        <path d="M.5 0v2.500h9V0M.5 4.500h9v4h-9zM.5 13v-2.500h9V13M12.500 0v3M12.500 8v5" />
        <path d="M11.500 4.500h2v2h-2z" fill="#e6e6e6" />
      </svg>
    ),
  },
  { name: "InDesign", icon: <AdobeTile t="Id" c="border-[#e0357f] bg-[#45102a] text-[#f0408c]" /> },
  {
    name: "Explorador",
    icon: (
      <svg width="17" height="15" viewBox="0 0 17 15" aria-hidden="true">
        <path d="M0 1h7l1 2h9v11H0z" fill="#e0a526" />
        <path d="M0 5h17v9H0z" fill="#fbdb7c" />
        <path d="M3 9h11v6h-3v-3H6v3H3z" fill="#3f9bd8" />
      </svg>
    ),
  },
  {
    name: "Edge",
    icon: (
      <svg width="16" height="16" viewBox="0 0 16 16" aria-hidden="true">
        <path d="M0 7C1 3 4 0 8 0s7.500 3 7.500 7v2H5c0 3 2 4 4.500 4 2 0 3.500-.5 5-1.500V15c-1.500.7-3.500 1-5.500 1-4 0-7-2-7-6 0-3 1.500-5 4-6-2.500.2-4.700 1-6 3zm5-1h6c0-2-1-3-3-3S5 4.500 5 6z" fill="#1183dc" />
      </svg>
    ),
  },
  {
    name: "Tienda",
    icon: (
      <svg width="18" height="17" viewBox="0 0 18 17" aria-hidden="true">
        <path d="M5.500 5V3c0-3 7-3 7 0v2" fill="none" stroke="#eee" />
        <path d="M0 4h18l-1 13H1z" fill="#f7f7f7" />
        <path d="M5 6h4v4H5z" fill="#e8502a" /><path d="M10 6h4v4h-4z" fill="#7ab51d" />
        <path d="M5 11h4v4H5z" fill="#1b9de2" /><path d="M10 11h4v4h-4z" fill="#f5b700" />
      </svg>
    ),
  },
  {
    name: "Correo",
    icon: (
      <svg width="19" height="17" viewBox="0 0 19 17" aria-hidden="true">
        <path d="M0 6l9.500-6L19 6v11H0z" fill="#1b6fc2" />
        <path d="M2 6h15l-7.500 6z" fill="#fff" />
        <path d="M0 6l9.500 6L19 6v11H0z" fill="#39a8ec" />
        <path d="M0 17L19 6v11z" fill="#60c4f8" />
      </svg>
    ),
  },
  { name: "Photoshop", open: true, icon: <AdobeTile t="Ps" c="border-[#1fa9d0] bg-[#06202c] text-[#28b8e0]" /> },
  { name: "Illustrator", open: true, active: true, icon: <AdobeTile t="Ai" c="border-[#e87a1e] bg-[#2c1402] text-[#f0821e]" /> },
  { name: "Premiere", icon: <AdobeTile t="Pr" c="border-[#c46be8] bg-[#2a0a38] text-[#d884f8]" /> },
  { name: "After Effects", icon: <AdobeTile t="Ae" c="border-[#a98be0] bg-[#1e0c38] text-[#bfa0f5]" /> },
  { name: "Audition", icon: <AdobeTile t="Au" c="border-[#16a88a] bg-[#052a24] text-[#1cc8a2]" /> },
  { name: "Dreamweaver", icon: <AdobeTile t="Dw" c="border-[#63d11a] bg-[#123304] text-[#7ff02a]" /> },
  { name: "XD", icon: <AdobeTile t="Xd" c="rounded-[3px] border-[#d0359a] bg-[#360822] text-[#ffe0f5]" /> },
  {
    name: "Chrome",
    open: true,
    icon: (
      <svg width="17" height="17" viewBox="0 0 18 18" aria-hidden="true">
        <circle cx="9" cy="9" r="9" fill="#f8c91c" />
        <path d="M9 9L1.200 4.500A9 9 0 0 1 16.800 4.500z" fill="#e03c31" />
        <path d="M1.200 4.500A9 9 0 0 0 9 18l4-6.500L9 9z" fill="#2da94f" />
        <circle cx="9" cy="9" r="4.200" fill="#fff" />
        <circle cx="9" cy="9" r="3.300" fill="#3f7fe8" />
      </svg>
    ),
  },
];

function Taskbar() {
  return (
    <footer className="flex h-[31px] shrink-0 border-t border-[#2a2a2a] bg-[linear-gradient(90deg,#2c2c30_25%,#382a2c_31%,#40332c_40%,#482a2e_52%,#48282e_65%,#2c293a_71%,#3e2e2c_80%,#40342a_90%,#46302e_100%)] text-[#eee]">
      <button aria-label="Inicio" className="flex w-[37px] items-center justify-center bg-[#1b2a36] text-white">
        <FaWindows size={13} />
      </button>
      <label className="flex w-[262px] items-center gap-2 border border-[#4c4c4c] bg-[#303030] pl-2">
        <svg width="13" height="13" viewBox="0 0 13 13" fill="none" stroke="#d0d0d0" aria-hidden="true">
          <circle cx="8" cy="5" r="4" />
          <path d="M5 8L.5 12.500" />
        </svg>
        <input aria-label="Buscar" placeholder="Escribe aquí para buscar" className="min-w-0 flex-1 bg-transparent text-[11px] outline-none placeholder:text-[#bdbdbd]" />
      </label>
      <div className="grid w-[560px] grid-cols-[repeat(15,1fr)]">
        {apps.map((a) => (
          <button
            key={a.name}
            aria-label={a.name}
            className={`flex items-center justify-center border-b-2 ${a.open ? "border-[#e9bd92]" : "border-transparent"} ${a.active ? "bg-[#6a5a5a]" : ""}`}
          >
            {a.icon}
          </button>
        ))}
      </div>
      <div className="ml-auto flex items-center text-[9px]">
        <svg width="40" height="12" viewBox="0 0 40 12" fill="none" stroke="#e6e6e6" aria-hidden="true">
          <path d="M0 8l4-4 4 4M18 1.500h11v6H22M23 10.500h5M25 8v2M17.500 2.500h3v3h-3zM19 6v4h3" />
          <path d="M35 4h1.500L39 1.500v9L36.500 8H35z" />
        </svg>
        <svg width="6" height="12" viewBox="0 0 6 12" fill="none" stroke="#bbb" aria-hidden="true">
          <path d="M0 4c1 1 1 3 0 4M2 2c2 2 2 6 0 8" />
        </svg>
        <span className="ml-[10px]">ESP</span>
        <span className="ml-3 flex w-10 flex-col items-center leading-[14px]">
          <span>20:56</span>
          <span>6/8/2020</span>
        </span>
        <button aria-label="Notificaciones" className="ml-3">
          <svg width="13" height="13" viewBox="0 0 13 13" fill="none" stroke="#e6e6e6" aria-hidden="true">
            <path d="M.5 1h12v9H9l-2.500 2.500L4 10H.5z" />
          </svg>
        </button>
        <span className="mr-[3px] ml-[14px] h-[30px] w-px bg-[#8a7a78]" />
      </div>
    </footer>
  );
}

export default function App() {
  return (
    <div className="flex h-screen flex-col overflow-hidden bg-[#1f1f1f] font-['Noto_Sans',sans-serif]">
      <MenuBar />
      <ControlBar />
      <div className="flex min-h-0 flex-1">
        <ToolsPanel />
        <DocumentWindow />
        <Dock />
      </div>
      <Taskbar />
    </div>
  );
}
